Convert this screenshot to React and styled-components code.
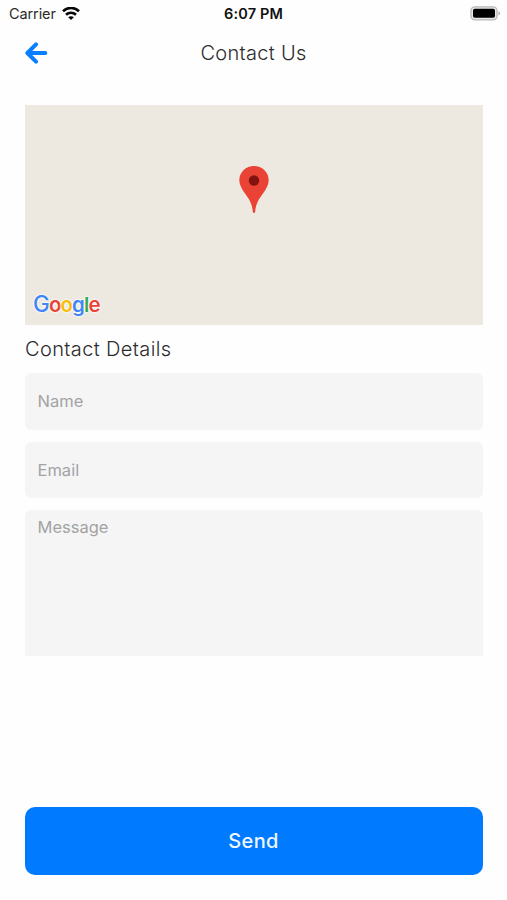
import React from 'react';
import styled, { createGlobalStyle, css } from 'styled-components';

const GlobalStyle = createGlobalStyle`
  * { box-sizing: border-box; }
  body { margin: 0; background: #fefefe; }
`;

const Screen = styled.div`
  width: 507px;
  height: 900px;
  display: flex;
  flex-direction: column;
  background: #fefefe;
  font-family: Inter, sans-serif;
  overflow: hidden;
`;

const StatusBar = styled.div`
  height: 27px;
  flex: none;
  display: grid;
  grid-template-columns: 1fr auto 1fr;
  align-items: center;
  padding: 0 6px 0 9px;
`;

const Carrier = styled.div`
  display: flex;
  align-items: center;
  gap: 6px;
  font-size: 14.5px;
  line-height: 18px;
  letter-spacing: -0.1px;
  color: #2b2b2b;
`;

const Clock = styled.div`
  margin-right: 3px;
  font-size: 14.5px;
  line-height: 18px;
  font-weight: 600;
  letter-spacing: 0.15px;
  color: #111;
`;

const BatteryIcon = styled.svg`
  justify-self: end;
  display: block;
`;

const Header = styled.header`
  height: 52px;
  flex: none;
  display: grid;
  grid-template-columns: 1fr auto 1fr;
  align-items: center;
  padding: 0 25px;
`;

const BackButton = styled.button`
  display: flex;
  width: 23px;
  height: 22px;
  padding: 0;
  border: 0;
  background: none;
`;

const headingText = css`
  margin: 0;
  font-family: Inter, sans-serif;
  font-weight: 300;
  font-size: 20px;
  line-height: 26px;
  color: #2c2c2e;
`;

const Title = styled.h1`
  ${headingText}
  letter-spacing: 0.3px;
`;

const SectionTitle = styled.h2`
  ${headingText}
  letter-spacing: 0.38px;
  margin: 11.5px 0 11px;
`;

const Content = styled.main`
  flex: 1;
  display: flex;
  flex-direction: column;
  padding: 26px 24px 25px 25px;
`;

const MapView = styled.div`
  height: 219.5px;
  flex: none;
  display: grid;
  background: #ede9e1;
`;

const MapPin = styled.svg`
  grid-area: 1 / 1;
  justify-self: center;
  margin-top: 60px;
`;

const GoogleLogo = styled.div`
  grid-area: 1 / 1;
  align-self: end;
  padding: 0 0 6.5px 8px;
  font-family: Inter, sans-serif;
  font-weight: 600;
  font-size: 20.5px;
  line-height: 26px;
  letter-spacing: -0.9px;
  text-shadow: 0 0 2px #fff, 0 0 2px #fff, 0 0 2px #fff;
`;

const Letter = styled.span`
  color: ${(p) => p.$color};
  &:first-child { font-size: 22.5px; font-weight: 500; }
`;

const Form = styled.form`
  flex: 1;
  display: flex;
  flex-direction: column;
  gap: 12px;
`;

const fieldStyle = css`
  display: block;
  width: 100%;
  flex: none;
  border: 0;
  border-radius: 6px;
  outline: none;
  background: #f5f5f5;
  color: #333;
  font-family: Inter, sans-serif;
  font-size: 16.5px;
  line-height: 22px;
  &::placeholder { color: #a3a3a3; opacity: 1; }
`;

const Field = styled.input`
  ${fieldStyle}
  height: 56.5px;
  padding: 0 12.5px;
`;

const MessageField = styled.textarea`
  ${fieldStyle}
  height: 146px;
  padding: 6px 12.5px;
  border-radius: 6px 6px 1px 1px;
  resize: none;
`;

const SendButton = styled.button`
  height: 68px;
  flex: none;
  margin-top: auto;
  padding: 0 1px 0 0;
  border: 0;
  border-radius: 10px;
  background: #007bff;
  color: #eff7ff;
  font-family: Inter, sans-serif;
  font-weight: 500;
  font-size: 20px;
  letter-spacing: 0.3px;
`;

const LOGO = [
  ['G', '#4285f4'],
  ['o', '#ea4335'],
  ['o', '#fbbc05'],
  ['g', '#4285f4'],
  ['l', '#34a853'],
  ['e', '#ea4335'],
];

export default function App() {
  return (
    <Screen>
      <GlobalStyle />
      <StatusBar>
        <Carrier>
          Carrier
          <svg width="18" height="14" viewBox="0 0 18 14" fill="none" stroke="#080808" strokeWidth="2.6">
            <path d="M1 4.2C5.5 -.2 12.5 -.2 17 4.2" />
            <path d="M4 7.7C6.8 5 11.2 5 14 7.7" />
            <path d="M9 13 6.2 10.2C7.8 8.8 10.2 8.8 11.8 10.2Z" fill="#080808" stroke="none" />
          </svg>
        </Carrier>
        <Clock>6:07 PM</Clock>
        <BatteryIcon width="31" height="15" viewBox="0 0 31 15">
          <rect x="1" y=".8" width="26" height="13" rx="3.8" fill="#e8e8e8" stroke="#b8b8b8" strokeWidth="1.3" />
          <rect x="3" y="2.8" width="22" height="9" rx="1.8" fill="#000" />
          <path d="M28.5 5.2C30.7 6 30.7 8.6 28.5 9.4Z" fill="#b0b0b0" />
        </BatteryIcon>
      </StatusBar>
      <Header>
        <BackButton aria-label="Back">
          <svg width="23" height="22" viewBox="0 0 23 22" fill="none" stroke="#087fff" strokeWidth="4" strokeLinecap="round" strokeLinejoin="round">
            <path d="M11 2.3 2.4 11 11 19.7" />
            <path d="M3 11H20.3" />
          </svg>
        </BackButton>
        <Title>Contact Us</Title>
      </Header>
      <Content>
        <MapView>
          <MapPin width="30" height="49" viewBox="0 0 30 49">
            <path d="M15 1C7.1 1 .3 7.1 .3 15.2C.3 20 3 24.2 6.2 28.7C10 34 13.3 38.4 13.8 47Q15 49 16.2 47C16.7 38.4 20 34 23.8 28.7C27 24.2 29.7 20 29.7 15.2C29.7 7.1 22.9 1 15 1Z" fill="#ea4335" />
            <circle cx="15" cy="15.5" r="5.2" fill="#811411" />
          </MapPin>
          <GoogleLogo>
            {LOGO.map(([letter, color], i) => (
              <Letter key={i} $color={color}>{letter}</Letter>
            ))}
          </GoogleLogo>
        </MapView>
        <SectionTitle>Contact Details</SectionTitle>
        <Form>
          <Field type="text" placeholder="Name" />
          <Field type="email" placeholder="Email" />
          <MessageField placeholder="Message" />
          <SendButton type="button">Send</SendButton>
        </Form>
      </Content>
    </Screen>
  );
}
